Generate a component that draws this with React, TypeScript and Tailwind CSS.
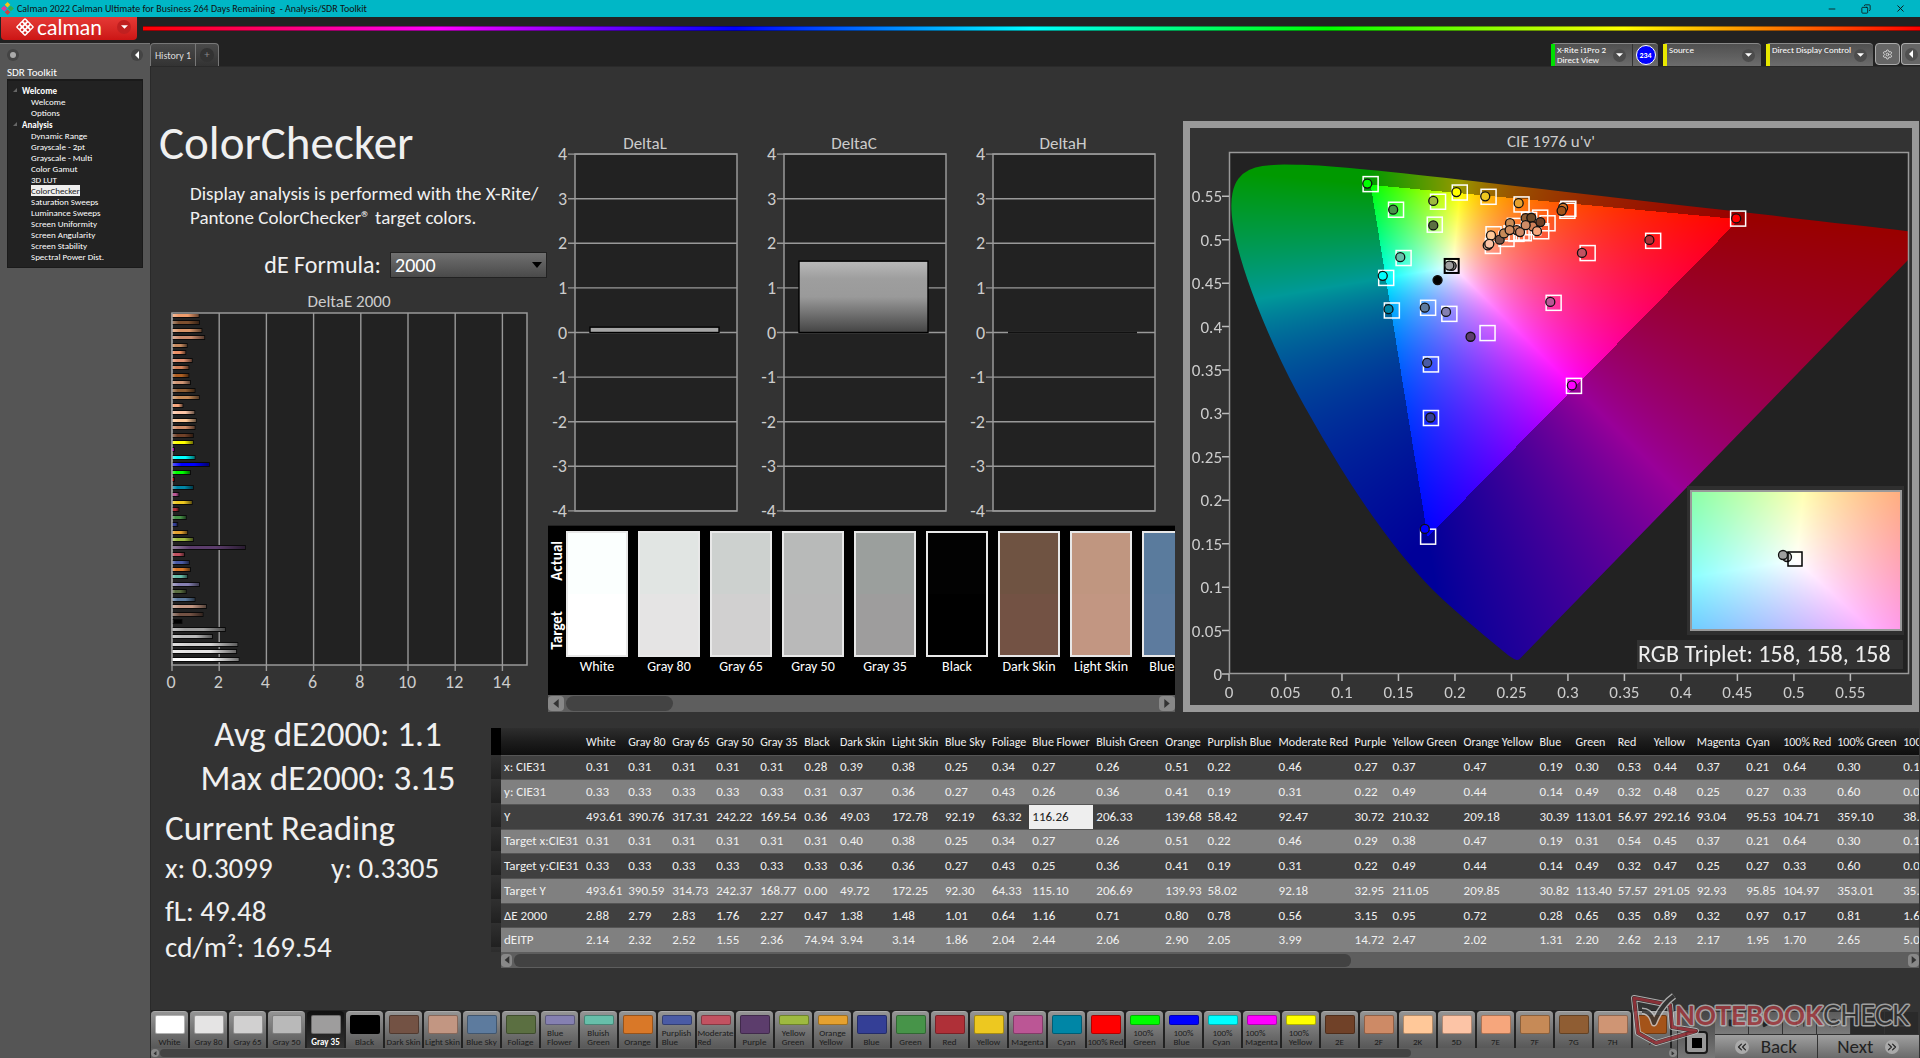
import { useEffect, useRef } from "react";
import { Settings, Minus, X, Copy, ChevronsLeft, ChevronsRight, Square, Play, SkipForward, RefreshCw } from "lucide-react";

type Patch = { name: string; color: string; actual?: string };

const patches: Patch[] = [
  { name: "White", color: "#ffffff", actual: "#fbfffe" },
  { name: "Gray 80", color: "#e5e4e4", actual: "#e1e5e3" },
  { name: "Gray 65", color: "#d1d0d0", actual: "#cdd1cf" },
  { name: "Gray 50", color: "#b9b9b9", actual: "#b8bab9" },
  { name: "Gray 35", color: "#9e9d9d", actual: "#9b9f9d" },
  { name: "Black", color: "#000000", actual: "#020202" },
  { name: "Dark Skin", color: "#735244", actual: "#6f5342" },
  { name: "Light Skin", color: "#c29682", actual: "#c09680" },
  { name: "Blue Sky", color: "#5d7b9e", actual: "#5a7b9d" },
  { name: "Foliage", color: "#5b6f41" },
  { name: "Blue Flower", color: "#8580b1" },
  { name: "Bluish Green", color: "#67bfaa" },
  { name: "Orange", color: "#d97828" },
  { name: "Purplish Blue", color: "#4a5ba5" },
  { name: "Moderate Red", color: "#c25261" },
  { name: "Purple", color: "#5c3d6c" },
  { name: "Yellow Green", color: "#9eba40" },
  { name: "Orange Yellow", color: "#e5a12f" },
  { name: "Blue", color: "#343f96" },
  { name: "Green", color: "#479449" },
  { name: "Red", color: "#af3038" },
  { name: "Yellow", color: "#edc820" },
  { name: "Magenta", color: "#bb5695" },
  { name: "Cyan", color: "#0086a6" },
  { name: "100% Red", color: "#ff0000" },
  { name: "100% Green", color: "#00ff00" },
  { name: "100% Blue", color: "#0000ff" },
  { name: "100% Cyan", color: "#00ffff" },
  { name: "100% Magenta", color: "#ff00ff" },
  { name: "100% Yellow", color: "#ffff00" },
  { name: "2E", color: "#704128" },
  { name: "2F", color: "#cd8a66" },
  { name: "2K", color: "#ffc899" },
  { name: "5D", color: "#fcc4a6" },
  { name: "7E", color: "#f6a67c" },
  { name: "7F", color: "#c68a57" },
  { name: "7G", color: "#8f5d33" },
  { name: "7H", color: "#cf9574" },
  { name: "7I", color: "#a45319" },
];

const twoLine = new Set(["Blue Flower", "Bluish Green", "Purplish Blue", "Moderate Red", "Yellow Green", "Orange Yellow", "100% Green", "100% Blue", "100% Cyan", "100% Magenta", "100% Yellow"]);

const columnWidths = [42, 44, 44, 44, 44, 35, 52, 53, 47, 40, 64, 69, 42, 71, 76, 38, 71, 76, 36, 41, 36, 43, 49, 37, 54, 66, 70];

const rows: [string, string][] = [
  ["x: CIE31", "0.31 0.31 0.31 0.31 0.31 0.28 0.39 0.38 0.25 0.34 0.27 0.26 0.51 0.22 0.46 0.27 0.37 0.47 0.19 0.30 0.53 0.44 0.37 0.21 0.64 0.30 0.15"],
  ["y: CIE31", "0.33 0.33 0.33 0.33 0.33 0.31 0.37 0.36 0.27 0.43 0.26 0.36 0.41 0.19 0.31 0.22 0.49 0.44 0.14 0.49 0.32 0.48 0.25 0.27 0.33 0.60 0.06"],
  ["Y", "493.61 390.76 317.31 242.22 169.54 0.36 49.03 172.78 92.19 63.32 116.26 206.33 139.68 58.42 92.47 30.72 210.32 209.18 30.39 113.01 56.97 292.16 93.04 95.53 104.71 359.10 38.05"],
  ["Target x:CIE31", "0.31 0.31 0.31 0.31 0.31 0.31 0.40 0.38 0.25 0.34 0.27 0.26 0.51 0.22 0.46 0.29 0.38 0.47 0.19 0.31 0.54 0.45 0.37 0.21 0.64 0.30 0.15"],
  ["Target y:CIE31", "0.33 0.33 0.33 0.33 0.33 0.33 0.36 0.36 0.27 0.43 0.25 0.36 0.41 0.19 0.31 0.22 0.49 0.44 0.14 0.49 0.32 0.47 0.25 0.27 0.33 0.60 0.06"],
  ["Target Y", "493.61 390.59 314.73 242.37 168.77 0.00 49.72 172.25 92.30 64.33 115.10 206.69 139.93 58.02 92.18 32.95 211.05 209.85 30.82 113.40 57.57 291.05 92.93 95.85 104.97 353.01 35.63"],
  ["ΔE 2000", "2.88 2.79 2.83 1.76 2.27 0.47 1.38 1.48 1.01 0.64 1.16 0.71 0.80 0.78 0.56 3.15 0.95 0.72 0.28 0.65 0.35 0.89 0.32 0.97 0.17 0.81 1.61"],
  ["dEITP", "2.14 2.32 2.52 1.55 2.36 74.94 3.94 3.14 1.86 2.04 2.44 2.06 2.90 2.05 3.99 14.72 2.47 2.02 1.31 2.20 2.62 2.13 2.17 1.95 1.70 2.65 5.04"],
];

const deltaE: [string, number][] = [
  ["#ef9c6c", 1.16], ["#7d4f2f", 1.18], ["#d89468", 1.28], ["#c98a6c", 1.4], ["#c68a5f", 0.66], ["#ec8f64", 0.6], ["#e09070", 0.87], ["#d08058", 0.73],
  ["#b06022", 0.73], ["#cf9574", 0.8], ["#8f5d33", 0.99], ["#c68a57", 1.17], ["#f6a67c", 0.48], ["#fcc4a6", 0.98], ["#ffc899", 1.04], ["#cd8a66", 0.99],
  ["#704128", 0.92], ["#ffff00", 0.92], ["#ff00ff", 0.12], ["#00ffff", 0.99], ["#0000ff", 1.6], ["#00ff00", 0.8], ["#ff0000", 0.12], ["#0086a6", 0.92],
  ["#bb5695", 0.31], ["#edc820", 0.87], ["#af3038", 0.31], ["#479449", 0.62], ["#343f96", 0.26], ["#e5a12f", 0.68], ["#9eba40", 0.92], ["#5c3d6c", 3.12],
  ["#c25261", 0.55], ["#4a5ba5", 0.75], ["#d97828", 0.8], ["#67bfaa", 0.68], ["#8580b1", 1.18], ["#5b6f41", 0.62], ["#5d7b9e", 0.99], ["#c29682", 1.47],
  ["#735244", 1.33], ["#000000", 0.44], ["#9e9e9e", 2.27], ["#b9b9b9", 1.73], ["#d1d0d0", 2.8], ["#e5e4e4", 2.75], ["#ffffff", 2.85],
];

/* Spectral locus, CIE 1931 x y pairs. */
const locus: [number, number][] = [
  [0.1741, 0.005], [0.1733, 0.0048], [0.1714, 0.0051], [0.1689, 0.0069], [0.1644, 0.0109], [0.1566, 0.0177], [0.144, 0.0297], [0.1355, 0.0399],
  [0.1241, 0.0578], [0.1096, 0.0868], [0.0913, 0.1327], [0.0687, 0.2007], [0.0454, 0.295], [0.0235, 0.4127], [0.0082, 0.5384], [0.0039, 0.6548],
  [0.0139, 0.7502], [0.0389, 0.812], [0.0743, 0.8338], [0.1142, 0.8262], [0.1547, 0.8059], [0.2296, 0.7543], [0.3016, 0.6923], [0.3731, 0.6245],
  [0.4441, 0.5547], [0.5125, 0.4866], [0.5752, 0.4242], [0.627, 0.3725], [0.6658, 0.334], [0.6915, 0.3083], [0.719, 0.2809], [0.7347, 0.2653],
];

const targets: [number, number][] = [
  [0.1249, 0.5646], [0.2038, 0.5549], [0.2293, 0.55], [0.2585, 0.5412], [0.1846, 0.5443], [0.1817, 0.5179], [0.1474, 0.5351], [0.1541, 0.4795],
  [0.1387, 0.4566], [0.1437, 0.4191], [0.1758, 0.4222], [0.1946, 0.4152], [0.2284, 0.3931], [0.1783, 0.357], [0.1783, 0.2953], [0.1758, 0.1587],
  [0.3049, 0.3323], [0.2869, 0.4279], [0.317, 0.4852], [0.375, 0.4993], [0.4502, 0.5249], [0.2999, 0.5362], [0.2991, 0.5339],
  [0.2337, 0.5069], [0.2331, 0.4934], [0.2452, 0.5015], [0.2496, 0.508], [0.2526, 0.5165], [0.254, 0.5073], [0.2585, 0.5088], [0.2605, 0.508],
  [0.2652, 0.5234], [0.2688, 0.5149], [0.275, 0.526], [0.2815, 0.5195], [0.2759, 0.5103],
];

const readings: [number, number, string][] = [
  [0.1224, 0.5646, "#00ff00"], [0.2013, 0.5549, "#ffff00"], [0.2268, 0.55, "#edc820"], [0.2564, 0.5421, "#e5a12f"], [0.1808, 0.5447, "#9eba40"],
  [0.1808, 0.5165, "#5b6f41"], [0.1453, 0.5346, "#479449"], [0.1516, 0.4799, "#67bfaa"], [0.1361, 0.4584, "#00ffff"], [0.1412, 0.42, "#0086a6"],
  [0.1971, 0.47, "#808080"], [0.195, 0.4702, "#9e9e9e"], [0.1846, 0.4535, "#000000"], [0.1733, 0.4218, "#5d7b9e"], [0.1921, 0.4169, "#8580b1"],
  [0.2138, 0.3883, "#5c3d6c"], [0.1754, 0.3583, "#4a5ba5"], [0.1783, 0.2953, "#343f96"], [0.1733, 0.167, "#0000ff"], [0.3035, 0.3323, "#ff00ff"],
  [0.2844, 0.4284, "#bb5695"], [0.3124, 0.4848, "#c25261"], [0.3721, 0.4998, "#af3038"], [0.4489, 0.5245, "#ff0000"],
  [0.2957, 0.5368, "#d97828"], [0.2944, 0.5333, "#a45319"], [0.2319, 0.505, "#ffc899"], [0.229, 0.4934, "#c29682"], [0.2304, 0.4953, "#fcc4a6"],
  [0.2396, 0.5, "#735244"], [0.2434, 0.5073, "#c68a57"], [0.2487, 0.5191, "#c98c57"], [0.2546, 0.5111, "#cd8155"], [0.2484, 0.5111, "#cf8c5f"],
  [0.2576, 0.5088, "#cd8a66"], [0.2626, 0.5249, "#8f5d33"], [0.2676, 0.5253, "#6f4a28"], [0.2688, 0.5153, "#d08058"], [0.2626, 0.5168, "#cf8c66"],
  [0.2726, 0.5099, "#f6a67c"], [0.2756, 0.5203, "#704128"],
];

const U_MAX = 0.601;
const PLOT_W = 679;
const PLOT_H = 522;
const ux = (u: number) => (u / U_MAX) * PLOT_W;
const vy = (v: number) => PLOT_H - (v / U_MAX) * PLOT_H;

function chroma(u: number, v: number): [number, number, number] {
  const d = 6 * u - 16 * v + 12;
  const x = (9 * u) / d;
  const y = (4 * v) / d;
  const z = 1 - x - y;
  const r = 3.2406 * x - 1.5372 * y - 0.4986 * z;
  const g = -0.9689 * x + 1.8758 * y + 0.0415 * z;
  const b = 0.0557 * x - 0.204 * y + 1.057 * z;
  const k = Math.min(r, g, b) < -0.0005 ? 153 : 255;
  const m = Math.max(r, g, b);
  const f = (c: number) => Math.pow(Math.max(c, 0) / m, 0.9) * k;
  return [f(r), f(g), f(b)];
}

function ChromaField({ u0, u1, v0, v1, w, h, outline }: { u0: number; u1: number; v0: number; v1: number; w: number; h: number; outline?: boolean }) {
  const ref = useRef<HTMLCanvasElement>(null);
  useEffect(() => {
    const field = document.createElement("canvas");
    field.width = w;
    field.height = h;
    const fctx = field.getContext("2d")!;
    const img = fctx.createImageData(w, h);
    for (let j = 0; j < h; j++) {
      for (let i = 0; i < w; i++) {
        const [r, g, b] = chroma(u0 + ((u1 - u0) * i) / w, v1 - ((v1 - v0) * (j + 1)) / h);
        const o = (j * w + i) * 4;
        img.data[o] = r;
        img.data[o + 1] = g;
        img.data[o + 2] = b;
        img.data[o + 3] = 255;
      }
    }
    fctx.putImageData(img, 0, 0);
    const ctx = ref.current!.getContext("2d")!;
    ctx.clearRect(0, 0, w, h);
    ctx.save();
    if (outline) {
      const pts = locus.map(([x, y]) => {
        const d = -2 * x + 12 * y + 3;
        return [ux((4 * x) / d), vy((9 * y) / d)];
      });
      ctx.beginPath();
      ctx.moveTo(pts[0][0], pts[0][1]);
      for (let i = 1; i < pts.length - 1; i++) {
        ctx.quadraticCurveTo(pts[i][0], pts[i][1], (pts[i][0] + pts[i + 1][0]) / 2, (pts[i][1] + pts[i + 1][1]) / 2);
      }
      ctx.lineTo(pts[pts.length - 1][0], pts[pts.length - 1][1]);
      ctx.closePath();
      ctx.clip();
    }
    ctx.drawImage(field, 0, 0);
    ctx.restore();
  }, [u0, u1, v0, v1, w, h, outline]);
  return <canvas ref={ref} width={w} height={h} className="block" />;
}

function CieChart() {
  const ticks = Array.from({ length: 12 }, (_, i) => i * 0.05);
  const label = (t: number) => String(Math.round(t * 100) / 100);
  return (
    <svg viewBox="0 0 722 577" className="block w-full" role="img" aria-label="CIE 1976 chromaticity diagram">
      <text x="361" y="19" textAnchor="middle" fontSize="17" fill="#ccc">CIE 1976 u'v'</text>
      <g transform="translate(39 24)">
        <rect width={PLOT_W} height={PLOT_H} fill="#222" />
        <foreignObject width={PLOT_W} height={PLOT_H}>
          <ChromaField u0={0} u1={U_MAX} v0={0} v1={U_MAX} w={PLOT_W} h={PLOT_H} outline />
        </foreignObject>
        <rect x="0.5" y="0.5" width={PLOT_W} height={PLOT_H - 1} fill="none" stroke="#999" strokeWidth="1.5" />
        {ticks.map((t) => (
          <g key={t} fontSize="17" fill="#ccc" stroke="none">
            <path d={`M-7 ${vy(t)}h7M${ux(t)} ${PLOT_H}v7`} stroke="#bbb" strokeWidth="1.5" fill="none" />
            <text x="-7" y={vy(t) + 6} textAnchor="end">{label(t)}</text>
            <text x={ux(t)} y={PLOT_H + 24} textAnchor="middle">{label(t)}</text>
          </g>
        ))}
        {targets.map(([u, v], i) => (
          <rect key={i} x={ux(u) - 7} y={vy(v) - 7} width="15" height="15" fill="none" stroke="#fff" strokeWidth="1.5" />
        ))}
        <rect x={ux(0.1971) - 7} y={vy(0.4698) - 7} width="14" height="14" fill="none" stroke="#000" strokeWidth="2" />
        {readings.map(([u, v, c], i) => (
          <circle key={i} cx={ux(u)} cy={vy(v)} r="4.5" fill={c} stroke="#111" strokeWidth="1.3" />
        ))}
        <rect x="458" y="334" width="217" height="149" fill="#2f2f2f" />
        <rect x="461" y="338" width="212" height="141" fill="#999" />
        <foreignObject x="463" y="340" width="208" height="137">
          <ChromaField u0={0.1718} u1={0.2238} v0={0.4445} v1={0.4925} w={208} h={137} />
        </foreignObject>
        <circle cx="558" cy="405" r="4.5" fill="#bbb" stroke="#111" strokeWidth="1.3" />
        <rect x="559" y="400" width="14" height="14" fill="none" stroke="#000" strokeWidth="1.5" />
        <circle cx="554" cy="403" r="4.5" fill="#9e9e9e" stroke="#111" strokeWidth="1.3" />
        <rect x="408" y="488" width="266" height="29" fill="#323232" />
        <text x="409" y="510" fontSize="24" fill="#eee">RGB Triplet: 158, 158, 158</text>
      </g>
    </svg>
  );
}

function DeltaEChart() {
  return (
    <svg viewBox="0 0 397 415" className="mt-[7px] block w-full" role="img" aria-label="DeltaE 2000 per patch">
      <defs>
        <linearGradient id="sheen">
          <stop offset="0" stopColor="#fff" stopOpacity="0.35" />
          <stop offset="0.25" stopColor="#fff" stopOpacity="0" />
          <stop offset="0.6" stopColor="#000" stopOpacity="0" />
          <stop offset="1" stopColor="#000" stopOpacity="0.55" />
        </linearGradient>
      </defs>
      <text x="198" y="22" textAnchor="middle" fontSize="17" fill="#ccc">DeltaE 2000</text>
      <rect x="21" y="28" width="355" height="352" fill="#222" />
      {[0, 2, 4, 6, 8, 10, 12, 14].map((t) => (
        <g key={t}>
          <path d={`M${21 + t * 23.6} 28V386`} stroke="#999" strokeWidth="1.4" />
          <text x={20 + t * 23.6} y="403" textAnchor="middle" fontSize="18" fill="#ccc">{t}</text>
        </g>
      ))}
      {deltaE.map(([c, v], i) => (
        <g key={i}>
          <rect x="21" y={28 + Math.round(i * 7.47)} width={v * 23.65} height="5" fill="#0a0a0a" />
          <rect x="21" y={29 + Math.round(i * 7.47)} width={Math.max(v * 23.65 - 1, 0)} height="3" fill={c} />
          <rect x="21" y={29 + Math.round(i * 7.47)} width={Math.max(v * 23.65 - 1, 0)} height="3" fill="url(#sheen)" />
        </g>
      ))}
      <rect x="21" y="28" width="355" height="352" fill="none" stroke="#999" strokeWidth="1.5" />
    </svg>
  );
}

function DeltaChart({ title, value }: { title: string; value: number }) {
  return (
    <svg viewBox="0 0 209 392" className="block w-full" role="img" aria-label={title}>
      <defs>
        <linearGradient id="block" x2="0" y2="1">
          <stop offset="0" stopColor="#b9b9b9" />
          <stop offset="0.25" stopColor="#9e9e9e" />
          <stop offset="0.5" stopColor="#9a9a9a" />
          <stop offset="1" stopColor="#444" />
        </linearGradient>
      </defs>
      <text x="104" y="19" textAnchor="middle" fontSize="17" fill="#ccc">{title}</text>
      <rect x="34" y="24" width="162" height="357" fill="#222" />
      {[4, 3, 2, 1, 0, -1, -2, -3, -4].map((t) => (
        <g key={t}>
          <path d={`M27 ${202.5 - t * 44.6}H196`} stroke="#999" strokeWidth="1.4" />
          <text x="26" y={208.5 - t * 44.6} textAnchor="end" fontSize="18" fill="#ccc">{t}</text>
        </g>
      ))}
      <rect x="34" y="24" width="162" height="357" fill="none" stroke="#999" strokeWidth="1.5" />
      {value > 0.02 ? (
        <rect x="49" y={202.5 - value * 44.6} width="129" height={value * 44.6} fill={value > 0.5 ? "url(#block)" : "#a5a5a5"} stroke="#000" strokeWidth="1.4" />
      ) : (
        <path d="M49 202.5H178" stroke="#111" strokeWidth="1.8" />
      )}
    </svg>
  );
}

function ArrowButton({ right, className = "" }: { right?: boolean; className?: string }) {
  return (
    <button aria-label={right ? "Scroll right" : "Scroll left"} className={`flex shrink-0 items-center justify-center rounded-sm bg-[#888] ${className}`}>
      <svg viewBox="0 0 6 10" className="h-3/5 w-[6px]"><path d={right ? "M0 0L6 5L0 10Z" : "M6 0L0 5L6 10Z"} fill="#333" /></svg>
    </button>
  );
}

function Swatches() {
  return (
    <div className="mt-[3px]">
      <div className="flex h-[170px] overflow-hidden border-t border-[#222] bg-black text-white">
        <div className="flex w-[18px] shrink-0 flex-col items-center justify-around pb-[30px] text-[15px] leading-[18px] font-bold">
          <span className="rotate-180 [writing-mode:vertical-rl]">Actual</span>
          <span className="rotate-180 [writing-mode:vertical-rl]">Target</span>
        </div>
        <div className="flex min-w-0 flex-1 gap-[10px] overflow-hidden pt-[5px]">
          {patches.slice(0, 9).map((p) => (
            <div key={p.name} className="flex w-[62px] shrink-0 flex-col items-center">
              <div className="flex h-[126px] w-full flex-col border-2 border-[#e8e8e8]">
                <span className="flex-1" style={{ backgroundColor: p.actual ?? p.color }} />
                <span className="flex-1" style={{ backgroundColor: p.color }} />
              </div>
              <span className="text-sm leading-[20px] whitespace-nowrap">{p.name}</span>
            </div>
          ))}
        </div>
      </div>
      <div className="flex h-[17px] items-center bg-[#5e5e5e]">
        <ArrowButton className="h-[15px] w-[16px]" />
        <div className="ml-[2px] h-[15px] w-[107px] rounded-lg bg-[#434343]" />
        <ArrowButton right className="ml-auto h-[15px] w-[16px]" />
      </div>
    </div>
  );
}

function DataTable() {
  return (
    <div className="mt-4 mr-px flex min-w-0 flex-1 items-start">
      <div className="flex h-[224px] w-[10px] shrink-0 flex-col">
        <div className="h-[27px] bg-black" />
        <div className="flex-1 bg-[repeating-linear-gradient(#303030_0px,#202020_24px)]" />
      </div>
      <div className="min-w-0 flex-1">
        <div className="overflow-hidden">
          <table className="h-[224px] w-max table-fixed border-collapse text-left text-[#f0f0f0]">
            <colgroup>
              <col className="w-[82px]" />
              {columnWidths.map((w, i) => <col key={i} style={{ width: w }} />)}
            </colgroup>
            <thead>
              <tr className="h-[27px] bg-linear-to-b from-[#2e2e2e] via-[#1c1c1c] to-[#0e0e0e] text-xs">
                <td />
                {columnWidths.map((_, i) => <th key={i} className="px-[3px] pt-[2px] font-normal whitespace-nowrap">{patches[i].name}</th>)}
              </tr>
            </thead>
            <tbody>
              {rows.map(([name, values]) => (
                <tr key={name} className="border-t border-[#555] bg-[#404040] text-[13px] leading-[18px] even:bg-[#808080]">
                  <th className="px-[3px] font-normal whitespace-nowrap">{name}</th>
                  {values.split(" ").map((v, i) => (
                    <td key={i} className={v === "116.26" ? "bg-[#eee] px-[3px] text-[#222]" : "px-[3px]"}>{v}</td>
                  ))}
                </tr>
              ))}
            </tbody>
          </table>
        </div>
        <div className="flex h-[16px] items-center bg-[#5e5e5e]">
          <ArrowButton className="h-[13px] w-[11px]" />
          <div className="ml-[2px] h-[13px] w-[59%] rounded-md bg-[#424242]" />
          <ArrowButton right className="ml-auto h-[13px] w-[11px]" />
        </div>
      </div>
    </div>
  );
}

function TransportButton({ children, dim }: { children: React.ReactNode; dim?: boolean }) {
  return (
    <button aria-label="Transport" className={`flex flex-1 items-center justify-center border-r border-[#333] ${dim ? "bg-[#2a2a2a] text-[#555]" : "bg-linear-to-b from-[#5c5c5c] to-[#7c7c7c] text-[#222]"}`}>
      {children}
    </button>
  );
}

function Toolbar() {
  return (
    <div className="relative mt-auto flex h-[48px] bg-[#333]">
      <div className="flex min-w-0 flex-1 flex-col">
        <div className="flex h-[38px] gap-[2px] overflow-hidden bg-[#222] pt-px">
          {patches.map((p) => (
            <button
              key={p.name}
              className={`flex h-[37px] w-[37px] shrink-0 flex-col items-center rounded-t-sm border-t pt-[3px] text-[9px] leading-[9px] ${p.name === "Gray 35" ? "border-[#111] bg-linear-to-b from-[#111] to-[#333] font-bold text-white" : "border-[#aaa] bg-linear-to-b from-[#949494] to-[#585858] text-[#1c1c1c]"}`}
            >
              <span className={`block w-[30px] shrink-0 rounded-xs border border-black/30 ${twoLine.has(p.name) ? "h-[10px]" : "h-[19px]"}`} style={{ backgroundColor: p.color }} />
              <span className={`flex flex-1 items-center text-left ${twoLine.has(p.name) ? "w-min" : "whitespace-nowrap"}`}>{p.name}</span>
            </button>
          ))}
          <span className="h-[37px] w-[5px] shrink-0 rounded-tl-sm border-t border-[#aaa] bg-linear-to-b from-[#949494] to-[#585858]" />
        </div>
        <div className="flex h-[10px] items-center bg-[#5e5e5e]">
          <ArrowButton className="h-[8px] w-[8px]" />
          <div className="ml-px h-[8px] w-[82%] rounded-sm bg-[#434343]" />
          <ArrowButton right className="ml-auto h-[8px] w-[8px]" />
        </div>
      </div>
      <div className="ml-px flex w-[37px] flex-col items-center justify-end bg-linear-to-b from-[#444] to-[#777] pb-[4px]">
        <button aria-label="Stop" className="flex h-[23px] w-[23px] items-center justify-center rounded-sm border-2 border-[#1a1a1a] bg-[#999]">
          <span className="h-[10px] w-[10px] bg-black" />
        </button>
      </div>
      <div className="mr-px flex w-[204px] flex-col bg-[#333]">
        <div className="mt-[2px] flex h-[22px]">
          <TransportButton><Square size={8} fill="currentColor" /></TransportButton>
          <TransportButton><Play size={10} fill="currentColor" /></TransportButton>
          <TransportButton><SkipForward size={10} /></TransportButton>
          <TransportButton><RefreshCw size={10} /></TransportButton>
          <TransportButton dim><Square size={8} /></TransportButton>
          <TransportButton dim><Square size={8} /></TransportButton>
        </div>
        <div className="mt-px flex h-[23px] gap-px text-[19px] leading-[22px] text-[#222]">
          <button className="flex flex-1 items-center justify-center gap-[12px] bg-linear-to-b from-[#a0a0a0] to-[#6a6a6a]">
            <span className="rounded-full bg-[#aaa]"><ChevronsLeft size={14} /></span>Back
          </button>
          <button className="flex flex-1 items-center justify-center gap-[12px] bg-linear-to-b from-[#a0a0a0] to-[#6a6a6a]">
            Next<span className="rounded-full bg-[#aaa]"><ChevronsRight size={14} /></span>
          </button>
        </div>
      </div>
      <svg viewBox="0 0 290 56" className="pointer-events-none absolute right-0 bottom-[9px] w-[290px] opacity-80" aria-label="Notebookcheck">
        <g fill="none" strokeLinejoin="round">
          <path d="M4 5L40 12L42 34L66 38L26 50L8 40Z" stroke="#ccc" strokeWidth="6" />
          <path d="M4 5L40 12L42 34L66 38L26 50L8 40Z" stroke="#333" strokeWidth="4" />
          <path d="M4 5L40 12L42 34L66 38L26 50L8 40Z" stroke="#a03038" strokeWidth="3" />
          <path d="M12 18C18 18 22 22 24 30C28 20 34 10 44 3" stroke="#ccc" strokeWidth="7" />
          <path d="M12 18C18 18 22 22 24 30C28 20 34 10 44 3" stroke="#333" strokeWidth="4" />
        </g>
        <text x="45" y="32" fontSize="26" className="font-[Lato] font-bold" stroke="#bbb" strokeWidth="3" paintOrder="stroke" strokeLinejoin="round">
          <tspan fill="#a83a40">NOTEBOOK</tspan><tspan fill="#333" fontWeight="400">CHECK</tspan>
        </text>
      </svg>
    </div>
  );
}

function TreeGroup({ title, items }: { title: string; items: string[] }) {
  return (
    <li>
      <div className="flex h-[12px] items-center font-bold">
        <svg viewBox="0 0 4 4" className="mr-[5px] ml-[5px] h-[4px] w-[4px]"><path d="M4 0V4H0Z" fill="#666" /></svg>
        {title}
      </div>
      <ul>
        {items.map((t) => (
          <li key={t} className="flex h-[11px] pl-[23px]">
            <a href="#" className={t === "ColorChecker" ? "bg-[#eee] text-[#222]" : ""}>{t}</a>
          </li>
        ))}
      </ul>
    </li>
  );
}

function Sidebar() {
  return (
    <aside className="w-[150px] shrink-0 border-t border-[#777] bg-[#555] px-[7px] text-white">
      <div className="flex h-[22px] items-center justify-between">
        <span className="flex h-[12px] w-[12px] items-center justify-center rounded-full bg-[#444]"><span className="h-[6px] w-[6px] rounded-full bg-[#aaa]" /></span>
        <button aria-label="Collapse" className="flex h-[12px] w-[12px] items-center justify-center rounded-full bg-[#444]">
          <svg viewBox="0 0 4 8" className="h-[8px] w-[4px]"><path d="M4 0V8L0 4Z" fill="#fff" /></svg>
        </button>
      </div>
      <h2 className="text-[11px] leading-[13px]">SDR Toolkit</h2>
      <ul className="border border-t-2 border-[#1a1a1a] bg-[#222] pt-[3px] pb-[5px] text-[9px] leading-[11px]">
        <TreeGroup title="Welcome" items={["Welcome", "Options"]} />
        <TreeGroup title="Analysis" items={["Dynamic Range", "Grayscale - 2pt", "Grayscale - Multi", "Color Gamut", "3D LUT", "ColorChecker", "Saturation Sweeps", "Luminance Sweeps", "Screen Uniformity", "Screen Angularity", "Screen Stability", "Spectral Power Dist."]} />
      </ul>
    </aside>
  );
}

function Dropper() {
  return (
    <span className="flex h-[13px] w-[13px] shrink-0 items-center justify-center rounded-full bg-[#4c4c4c]">
      <svg viewBox="0 0 8 4" className="h-[4px] w-[7px]"><path d="M0 0H8L4 4Z" fill="#fff" /></svg>
    </span>
  );
}

function DeviceTab({ lines, bar, badge, className }: { lines: string[]; bar: string; badge?: string; className: string }) {
  return (
    <div className={`flex h-full rounded-t-sm border-t border-[#888] bg-linear-to-b from-[#505050] to-[#6c6c6c] ${className}`}>
      <span className={`w-[4px] shrink-0 ${bar}`} />
      <button className="flex min-w-0 flex-1 items-center justify-between pr-[6px] pl-[2px] text-left">
        <span className="self-start pt-px leading-[10px] whitespace-nowrap">{lines.map((l) => <span key={l} className="block">{l}</span>)}</span>
        <Dropper />
      </button>
      {badge && (
        <span className="flex w-[26px] items-center justify-center border-l border-[#333]">
          <span className="flex h-[20px] w-[20px] items-center justify-center rounded-full border border-white bg-[#0000ff] text-[8px] font-bold">{badge}</span>
        </span>
      )}
    </div>
  );
}

function TabRow() {
  return (
    <div className="flex h-[23px] items-end bg-[#222] text-[9px] text-white">
      <div className="flex h-full items-stretch rounded-t-sm border-t border-r border-l border-[#777] bg-linear-to-b from-[#4a4a4a] to-[#333]">
        <button className="w-[44px] text-[10px] text-[#ddd]">History 1</button>
        <button aria-label="Add tab" className="flex w-[23px] items-center justify-center border-l border-[#777]">
          <span className="h-[14px] w-[14px] rounded-full bg-[#333] text-[11px] leading-[13px] text-[#888]">+</span>
        </button>
      </div>
      <div className="ml-auto flex h-full gap-[5px]">
        <DeviceTab lines={["X-Rite i1Pro 2", "Direct View"]} bar="bg-[#00e000]" badge="234" className="w-[107px]" />
        <DeviceTab lines={["Source"]} bar="bg-[#e8e800]" className="w-[98px]" />
        <DeviceTab lines={["Direct Display Control"]} bar="bg-[#e8e800]" className="w-[107px]" />
      </div>
      <button aria-label="Settings" className="ml-[2px] flex h-[22px] w-[25px] items-center justify-center self-start rounded-sm border border-[#aaa] bg-[#666] text-[#ddd]"><Settings size={11} /></button>
      <button aria-label="Collapse panel" className="ml-px flex h-[22px] w-[19px] items-center justify-center self-start rounded-l-sm border border-r-0 border-[#aaa] bg-[#666]">
        <span className="flex h-[13px] w-[13px] items-center justify-center rounded-full bg-[#505050]"><svg viewBox="0 0 4 8" className="h-[8px] w-[4px]"><path d="M4 0V8L0 4Z" fill="#fff" /></svg></span>
      </button>
    </div>
  );
}

function CalmanMark() {
  const cells = [0, 1, 2].flatMap((r) => [0, 1, 2].map((c) => [r, c]));
  return (
    <svg viewBox="0 0 18 18" className="h-[18px] w-[18px]">
      <g transform="rotate(45 9 9)" fill="none" stroke="#fff" strokeWidth="1.4">
        {cells.map(([r, c]) => <rect key={`${r}${c}`} x={3.1 + c * 4} y={3.1 + r * 4} width="3.8" height="3.8" rx="0.8" />)}
      </g>
    </svg>
  );
}

function Header() {
  return (
    <header>
      <div className="flex h-[17px] items-center bg-[#00b7c6] text-[10px] text-[#111]">
        <svg viewBox="0 0 14 14" className="mr-[3px] ml-px h-[13px] w-[13px]">
          <path d="M7 0L10 3L7 6L4 3Z" fill="#f5c518" /><path d="M3.5 4L6.5 7L3.5 10L0 7Z" fill="#e0389a" />
          <path d="M10.500 4L14 7L10.500 10L7.500 7Z" fill="#30b050" /><path d="M7 8L10 11L7 14L4 11Z" fill="#d04040" />
        </svg>
        <h1 className="whitespace-pre">Calman 2022 Calman Ultimate for Business 264 Days Remaining  - Analysis/SDR Toolkit</h1>
        <div className="ml-auto flex gap-[24px] pr-[14px]">
          <button aria-label="Minimize"><Minus size={10} strokeWidth={2} /></button>
          <button aria-label="Restore"><Copy size={10} strokeWidth={2} className="-scale-x-100" /></button>
          <button aria-label="Close"><X size={11} strokeWidth={2} /></button>
        </div>
      </div>
      <div className="flex h-[26px] bg-[#222]">
        <button className="ml-px flex h-[23px] w-[136px] items-center rounded-b-sm bg-linear-to-b from-[#e53935] to-[#cc1414] pb-[3px] pl-[15px] text-white">
          <CalmanMark />
          <span className="ml-[3px] font-[Lato] text-[21px] leading-[20px]">calman</span>
          <span className="ml-auto mr-[6px] flex h-[14px] w-[14px] items-center justify-center rounded-full bg-[#c02020]"><svg viewBox="0 0 8 4" className="h-[4px] w-[7px]"><path d="M0 0H8L4 4Z" fill="#fff" /></svg></span>
        </button>
        <div className="mt-[9px] ml-[6px] h-[5px] flex-1 border-y border-black/40 bg-[linear-gradient(to_right,#f00,#f0f,#00f,#0ff,#0f0,#ff0,#f00)]" />
      </div>
    </header>
  );
}

export default function App() {
  return (
    <div className="flex min-h-screen flex-col overflow-hidden bg-[#222] font-[Carlito,Lato,sans-serif]">
      <Header />
      <div className="flex flex-1">
        <Sidebar />
        <main className="flex min-w-0 flex-1 flex-col">
          <TabRow />
          <div className="flex flex-1 flex-col border-t border-l border-[#2a2a2a] bg-[#333] text-[#f0f0f0]">
            <div className="grid grid-cols-[minmax(0,397fr)_minmax(0,627fr)_minmax(0,745fr)]">
              <section className="pt-[52px]">
                <h2 className="ml-[8px] text-[47px] leading-[48px]">ColorChecker</h2>
                <p className="mt-[15px] ml-[39px] text-[19px] leading-6 whitespace-nowrap">
                  Display analysis is performed with the X-Rite/<br />Pantone ColorChecker® target colors.
                </p>
                <div className="mt-[22px] mr-px flex h-[26px] items-center justify-end gap-[9px]">
                  <label htmlFor="formula" className="text-2xl leading-[26px]">dE Formula:</label>
                  <div className="relative h-[26px] w-[157px]">
                    <select id="formula" className="h-full w-full appearance-none border border-[#222] bg-linear-to-b from-[#707070] to-[#4a4a4a] pl-[4px] text-xl leading-[24px] text-white">
                      <option>2000</option>
                    </select>
                    <svg viewBox="0 0 10 6" className="pointer-events-none absolute top-[10px] right-[5px] w-[10px]"><path d="M0 0H10L5 6Z" fill="#000" /></svg>
                  </div>
                </div>
                <DeltaEChart />
              </section>
              <section className="pt-[63px]">
                <div className="mr-[7px] -ml-[7px] grid grid-cols-3">
                  <DeltaChart title="DeltaL" value={0.12} />
                  <DeltaChart title="DeltaC" value={1.6} />
                  <DeltaChart title="DeltaH" value={0} />
                </div>
                <Swatches />
              </section>
              <section className="pt-[54px] pr-px pl-[8px]">
                <div className="border-7 border-[#999]"><CieChart /></div>
              </section>
            </div>
            <div className="flex">
              <section className="w-[340px] shrink-0 pl-[14px] text-[29px] leading-9">
                <div className="text-center text-[35px] leading-11">
                  <p>Avg dE2000: 1.1</p>
                  <p>Max dE2000: 3.15</p>
                </div>
                <h3 className="mt-2 text-[35px] leading-10">Current Reading</h3>
                <p className="mt-[2px] flex"><span className="w-[166px]">x: 0.3099</span><span>y: 0.3305</span></p>
                <p className="mt-[7px]">fL: 49.48</p>
                <p>cd/m²: 169.54</p>
              </section>
              <DataTable />
            </div>
            <Toolbar />
          </div>
        </main>
      </div>
    </div>
  );
}
